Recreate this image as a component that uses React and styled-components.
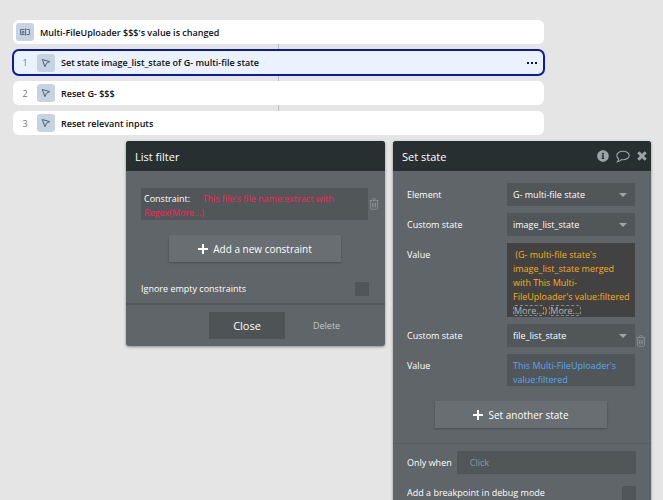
import React from "react";
import styled, { createGlobalStyle } from "styled-components";
import { FaInfoCircle } from "react-icons/fa";

const steps = [
  { id: 1, title: "Set state image_list_state of G- multi-file state", active: true },
  { id: 2, title: "Reset G- $$$" },
  { id: 3, title: "Reset relevant inputs" },
];

function CursorIcon() {
  return (
    <svg width="10" height="10" viewBox="0 0 10 10" fill="none" stroke="#4c6178" strokeLinejoin="round">
      <path d="M1.3 1.5 8.7 3.6 5.5 5.2 3.9 8.7Z" />
    </svg>
  );
}

function InputIcon() {
  return (
    <svg width="10" height="8" viewBox="0 0 10 8" fill="none" stroke="#5d7188">
      <path d="M4.5 1.5H.5v5h4M6.5 1.5h3v5h-3M5.5 .5v7M2 3.5h2v1.5H2z" />
    </svg>
  );
}

function TrashIcon() {
  return (
    <svg width="10" height="12" viewBox="0 0 10 12" fill="none" stroke="currentColor">
      <path d="M.5 2.5h9M3.3 2.3 3.8.7h2.4l.5 1.6M1.5 3v7.3q0 1 1 1h5q1 0 1-1V3M3.5 4.7v4.6M5 4.7v4.6M6.5 4.7v4.6" />
    </svg>
  );
}

function CommentIcon() {
  return (
    <svg width="14" height="13" viewBox="0 0 14 13" fill="none" stroke="currentColor" strokeWidth="1.1">
      <path d="M7 1.2c3.5 0 6.2 1.9 6.2 4.3S10.5 9.8 7 9.8q-.8 0-1.6-.1Q3.7 11.5 1.3 11.8q1.4-1.3 1.3-3Q.8 7.5.8 5.5C.8 3.1 3.5 1.2 7 1.2Z" />
    </svg>
  );
}

function CloseIcon() {
  return (
    <svg width="10" height="10" viewBox="0 0 10 10" stroke="currentColor" strokeWidth="3">
      <path d="m1.3 1.3 7.4 7.4M8.7 1.3 1.3 8.7" />
    </svg>
  );
}

function PlusIcon() {
  return (
    <svg width="10" height="10" viewBox="0 0 10 10" stroke="currentColor" strokeWidth="2">
      <path d="M5 0v10M0 5h10" />
    </svg>
  );
}

function SelectField({ id, label, value }) {
  return (
    <Field>
      <Label htmlFor={id}>{label}</Label>
      <SelectWrap>
        <Select id={id} defaultValue={value}>
          <option>{value}</option>
        </Select>
        <Arrow />
      </SelectWrap>
    </Field>
  );
}

function App() {
  return (
    <Page>
      <GlobalStyle />
      <Workflow>
        <Step>
          <StepIcon>
            <InputIcon />
          </StepIcon>
          <StepTitle>Multi-FileUploader $$$'s value is changed</StepTitle>
        </Step>
        {steps.map((step) => (
          <React.Fragment key={step.id}>
            <Connector />
            <Step $active={step.active}>
              <StepNumber>{step.id}</StepNumber>
              <StepIcon>
                <CursorIcon />
              </StepIcon>
              <StepTitle>{step.title}</StepTitle>
              {step.active && (
                <MenuButton aria-label="Step options">
                  <svg width="10" height="2" viewBox="0 0 10 2" fill="#111820">
                    <path d="M0 0h2v2H0zM4 0h2v2H4zM8 0h2v2H8z" />
                  </svg>
                </MenuButton>
              )}
            </Step>
          </React.Fragment>
        ))}
      </Workflow>

      <Panels>
        {/* list filter */}
        <Panel>
          <PanelHeader>
            <PanelTitle>List filter</PanelTitle>
          </PanelHeader>
          <FilterBody>
            <ConstraintRow>
              <Constraint>
                Constraint: <Rule>This file's file name:extract with Regex(More...)</Rule>
              </Constraint>
              <IconButton aria-label="Delete constraint">
                <TrashIcon />
              </IconButton>
            </ConstraintRow>
            <AddButton>
              <PlusIcon />
              Add a new constraint
            </AddButton>
            <CheckRow>
              <Label htmlFor="ignore-empty">Ignore empty constraints</Label>
              <Checkbox id="ignore-empty" />
            </CheckRow>
          </FilterBody>
          <FilterFooter>
            <CloseButton>Close</CloseButton>
            <DeleteButton>Delete</DeleteButton>
          </FilterFooter>
        </Panel>

        {/* set state */}
        <Panel>
          <PanelHeader>
            <PanelTitle>Set state</PanelTitle>
            <HeaderActions>
              <IconButton aria-label="Info">
                <FaInfoCircle size={12} />
              </IconButton>
              <IconButton aria-label="Comment">
                <CommentIcon />
              </IconButton>
              <IconButton aria-label="Close">
                <CloseIcon />
              </IconButton>
            </HeaderActions>
          </PanelHeader>
          <StateBody>
            <SelectField id="element" label="Element" value="G- multi-file state" />
            <SelectField id="state-1" label="Custom state" value="image_list_state" />
            <Field>
              <FieldName>Value</FieldName>
              <Expression $dark>
                &nbsp;(G- multi-file state's image_list_state merged with This Multi-FileUploader's value:filtered{" "}
                <More>More...</More>) <More>More...</More>
              </Expression>
            </Field>
            <RemovableField>
              <SelectField id="state-2" label="Custom state" value="file_list_state" />
              <IconButton aria-label="Delete state">
                <TrashIcon />
              </IconButton>
            </RemovableField>
            <Field>
              <FieldName>Value</FieldName>
              <Expression>This Multi-FileUploader's value:filtered</Expression>
            </Field>
            <AddButton $tight>
              <PlusIcon />
              Set another state
            </AddButton>
          </StateBody>
          <StateFooter>
            <OnlyWhen>
              <Label htmlFor="only-when">Only when</Label>
              <TextInput id="only-when" placeholder="Click" />
            </OnlyWhen>
            <CheckRow $tight>
              <Label htmlFor="breakpoint">Add a breakpoint in debug mode</Label>
              <Checkbox id="breakpoint" />
            </CheckRow>
          </StateFooter>
        </Panel>
      </Panels>
    </Page>
  );
}

export default App;

const GlobalStyle = createGlobalStyle`
  * {
    box-sizing: border-box;
  }
  body {
    margin: 0;
    background: #e5e5e5;
  }
  body, button, input, select {
    font-family: "Open Sans", sans-serif;
    font-size: 9px;
    font-weight: 500;
  }
  button {
    border: none;
    padding: 0;
    cursor: pointer;
  }
  svg {
    display: block;
    flex-shrink: 0;
  }
`;

const Page = styled.div`
  height: 100vh;
  overflow: hidden;
  padding-top: 20px;
`;
const Workflow = styled.div`
  margin: 0 119px 0 13px;
`;
const Step = styled.div`
  display: flex;
  align-items: center;
  height: ${(props) => (props.$active ? 25 : 24)}px;
  padding: 0 7px 0 3px;
  border-radius: 6px;
  background: ${(props) => (props.$active ? "#eaf2ff" : "#fff")};
  outline: ${(props) => (props.$active ? "2px solid #0a1ba0" : "none")};
  outline-offset: -1px;
`;
const Connector = styled.div`
  width: 1px;
  height: 6px;
  margin: 0 auto;
  background: #bdbdbd;
`;
const StepNumber = styled.span`
  width: 18px;
  margin-right: 3px;
  text-align: center;
  color: #777;
`;
const StepIcon = styled.span`
  display: flex;
  align-items: center;
  justify-content: center;
  width: 18px;
  height: 18px;
  border-radius: 3px;
  background: #c7d3e0;
`;
const StepTitle = styled.span`
  flex: 1;
  margin-left: 6px;
  font-weight: 600;
  color: #0c1014;
`;
const MenuButton = styled.button`
  padding: 6px 0;
  background: none;
`;

const Panels = styled.div`
  display: grid;
  grid-template-columns: 259fr 258fr;
  align-items: start;
  gap: 8px;
  margin: 6px 12px 0 126px;
`;
const Panel = styled.section`
  border-radius: 3px;
  background: #5f6568;
  color: #fff;
  box-shadow: 0 1px 3px rgba(0, 0, 0, 0.4);
`;
const PanelHeader = styled.header`
  display: flex;
  align-items: center;
  justify-content: space-between;
  height: 30px;
  padding: 0 4px 0 9px;
  border-radius: 3px 3px 0 0;
  background: #272f31;
`;
const PanelTitle = styled.h2`
  margin: 0;
  font-size: 11px;
  font-weight: 400;
`;
const HeaderActions = styled.div`
  display: flex;
  align-items: center;
  gap: 7px;
  color: #9da4a7;
`;
const IconButton = styled.button`
  background: none;
  color: inherit;
`;
const FilterBody = styled.div`
  padding: 17px 16px 7px 15px;
`;
const ConstraintRow = styled.div`
  display: flex;
  align-items: center;
  gap: 1px;
  margin-right: -10px;
  color: #858b8e;
`;
const Constraint = styled.div`
  flex: 1;
  padding: 4px 3px 0;
  height: 32px;
  line-height: 14px;
  background: #515659;
  color: #fff;
`;
const Rule = styled.span`
  margin-left: 10px;
  color: #ff1f56;
`;
const AddButton = styled.button`
  display: flex;
  align-items: center;
  justify-content: center;
  gap: 5px;
  width: 172px;
  height: 27px;
  margin: ${(props) => (props.$tight ? "8px" : "15px")} auto 15px;
  background: #686e71;
  color: #fff;
  font-size: 10px;
  box-shadow: 0 1px 2px rgba(0, 0, 0, 0.25);
`;
const CheckRow = styled.div`
  display: flex;
  align-items: center;
  justify-content: space-between;
  margin-top: ${(props) => (props.$tight ? "12px" : "20px")};
`;
const Label = styled.label`
  line-height: 14px;
`;
const Checkbox = styled.input.attrs({ type: "checkbox" })`
  appearance: none;
  width: 14px;
  height: 14px;
  margin: 0;
  background: #515659;
`;
const FilterFooter = styled.footer`
  display: flex;
  align-items: center;
  gap: 28px;
  padding: 7px 0 7px 83px;
  border-top: 2px solid #53595c;
`;
const CloseButton = styled.button`
  width: 76px;
  height: 27px;
  background: #4e5356;
  color: #fff;
  font-size: 11px;
`;
const DeleteButton = styled.button`
  background: none;
  color: #c3c6c8;
`;

const StateBody = styled.div`
  display: flex;
  flex-direction: column;
  gap: 7px;
  padding: 12px 16px 0 14px;
`;
const Field = styled.div`
  display: grid;
  grid-template-columns: 100px 1fr;
  line-height: 14px;

  > :first-child {
    padding-top: 5px;
  }
`;
const FieldName = styled.span`
  line-height: 14px;
`;
const SelectWrap = styled.div`
  position: relative;
`;
const Select = styled.select`
  appearance: none;
  display: block;
  width: 100%;
  height: 23px;
  padding: 0 18px 0 6px;
  border: none;
  border-radius: 0;
  background: #515659;
  color: #fff;
`;
const Arrow = styled.span`
  position: absolute;
  top: 10px;
  right: 8px;
  border: 4px solid transparent;
  border-top-color: #a0a5a7;
  border-bottom: none;
  pointer-events: none;
`;
const Expression = styled.div`
  padding: 5px 3px 0 6px;
  height: ${(props) => (props.$dark ? "74px" : "32px")};
  background: ${(props) => (props.$dark ? "#424242" : "#515659")};
  color: ${(props) => (props.$dark ? "#fbae17" : "#58a6f5")};
`;
const More = styled.button`
  padding: 0 1px;
  border-radius: 2px;
  outline: 1px dashed #8a8a8a;
  outline-offset: -1px;
  background: none;
  color: #b5b5b5;
  line-height: 11px;
`;
const RemovableField = styled.div`
  display: grid;
  grid-template-columns: 1fr 10px;
  align-items: end;
  margin-right: -11px;
  column-gap: 1px;
  color: #858b8e;

  label {
    color: #fff;
  }
`;
const StateFooter = styled.footer`
  padding: 7px 15px 12px 14px;
  border-top: 1px solid #555b5e;
`;
const OnlyWhen = styled.div`
  display: flex;
  align-items: center;
  gap: 5px;
`;
const TextInput = styled.input`
  flex: 1;
  min-width: 0;
  height: 23px;
  padding: 0 13px;
  border: none;
  background: #515659;
  color: #fff;

  &::placeholder {
    color: #94999b;
    opacity: 1;
  }
`;
